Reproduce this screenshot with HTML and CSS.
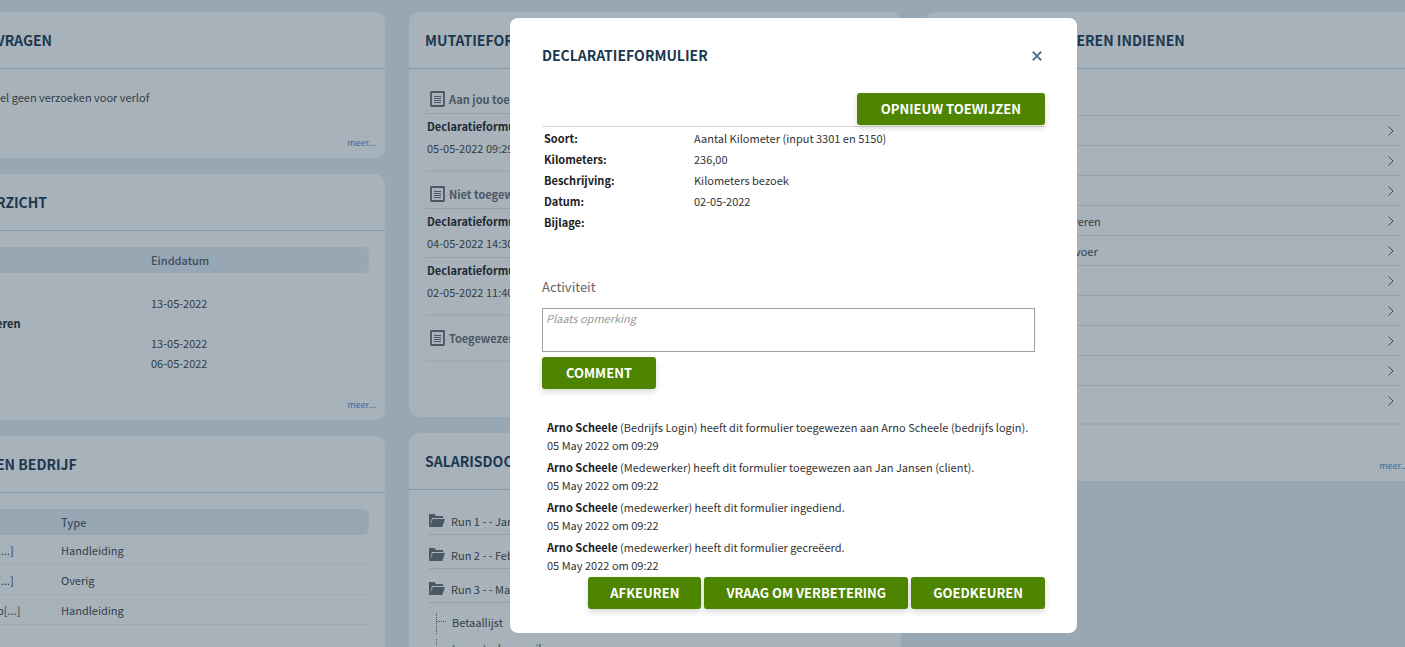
FILE: index.html
```html
<!DOCTYPE html>
<html lang="nl">
<head>
<meta charset="utf-8">
<meta name="viewport" content="width=device-width, initial-scale=1">
<title>Declaratieformulier</title>
<link rel="stylesheet" href="styles.css">
</head>
<body>
<svg class="sprite" aria-hidden="true">
  <symbol id="doc" viewBox="0 0 15 16"><rect x="1" y="1" width="13" height="14" rx=".5" fill="none" stroke="currentColor" stroke-width="1.8"/><path d="M4 5.5h7M4 7.5h7M4 9.5h7M4 11.5h7" stroke="currentColor"/></symbol>
  <symbol id="folder" viewBox="0 0 16 13"><path d="M0 13V0h5.500l1.500 2h7v2H3L.8 12.200L3.800 5H16L13.300 13Z" fill="currentColor"/></symbol>
  <symbol id="chevron" viewBox="0 0 7 10"><path d="M.5 .5L5 5L.5 9.500" fill="none" stroke="currentColor" stroke-width=".9"/></symbol>
</svg>
<main class="board">
  <div class="column">
    <section class="card">
      <h2 class="card-title">VRAGEN</h2>
      <div class="card-body">
        <p class="notice">el geen verzoeken voor verlof</p>
        <a class="more" href="#">meer...</a>
      </div>
    </section>
    <section class="card">
      <h2 class="card-title">RZICHT</h2>
      <div class="card-body">
        <table class="grid leave">
          <thead><tr><th></th><th>Einddatum</th></tr></thead>
          <tbody>
            <tr><td></td><td>13-05-2022</td></tr>
            <tr><td><b>eren</b></td><td></td></tr>
            <tr><td></td><td>13-05-2022</td></tr>
            <tr><td></td><td>06-05-2022</td></tr>
          </tbody>
        </table>
        <a class="more more-table" href="#">meer...</a>
      </div>
    </section>
    <section class="card card-tall">
      <h2 class="card-title">EN BEDRIJF</h2>
      <div class="card-body">
        <table class="grid files">
          <thead><tr><th></th><th>Type</th></tr></thead>
          <tbody>
            <tr><td>[...]</td><td>Handleiding</td></tr>
            <tr><td>[...]</td><td>Overig</td></tr>
            <tr><td>p[...]</td><td>Handleiding</td></tr>
          </tbody>
        </table>
      </div>
    </section>
  </div>

  <div class="column">
    <section class="card">
      <h2 class="card-title">MUTATIEFORMULIEREN</h2>
      <div class="card-body forms">
        <div class="group">
          <h3 class="group-title"><svg class="doc"><use href="#doc"/></svg>Aan jou toegewezen</h3>
          <div class="form-item"><b>Declaratieformulier</b><span>05-05-2022 09:29</span></div>
        </div>
        <div class="group">
          <h3 class="group-title"><svg class="doc"><use href="#doc"/></svg>Niet toegewezen</h3>
          <div class="form-item"><b>Declaratieformulier</b><span>04-05-2022 14:30</span></div>
          <div class="form-item"><b>Declaratieformulier</b><span>02-05-2022 11:40</span></div>
        </div>
        <div class="group">
          <h3 class="group-title"><svg class="doc"><use href="#doc"/></svg>Toegewezen</h3>
        </div>
      </div>
    </section>
    <section class="card">
      <h2 class="card-title">SALARISDOCUMENTEN</h2>
      <div class="card-body runs">
        <div class="run"><svg class="folder"><use href="#folder"/></svg>Run 1 - - Januari</div>
        <div class="run"><svg class="folder"><use href="#folder"/></svg>Run 2 - - Februari</div>
        <div class="run"><svg class="folder"><use href="#folder"/></svg>Run 3 - - Maart</div>
        <ul class="tree">
          <li>Betaallijst</li>
          <li>Loonstroken mail</li>
        </ul>
      </div>
    </section>
  </div>

  <div class="column">
    <section class="card">
      <h2 class="card-title">MUTATIE - FORMULIEREN INDIENEN</h2>
      <div class="card-body submit">
        <ul class="links">
          <li><a href="#" aria-label="Formulier 1"><svg class="chevron"><use href="#chevron"/></svg></a></li>
          <li><a href="#" aria-label="Formulier 2"><svg class="chevron"><use href="#chevron"/></svg></a></li>
          <li><a href="#" aria-label="Formulier 3"><svg class="chevron"><use href="#chevron"/></svg></a></li>
          <li><a href="#">Nieuwe werknemer registreren<svg class="chevron"><use href="#chevron"/></svg></a></li>
          <li><a href="#">Reiskosten woon-werkvervoer<svg class="chevron"><use href="#chevron"/></svg></a></li>
          <li><a href="#" aria-label="Formulier 6"><svg class="chevron"><use href="#chevron"/></svg></a></li>
          <li><a href="#" aria-label="Formulier 7"><svg class="chevron"><use href="#chevron"/></svg></a></li>
          <li><a href="#" aria-label="Formulier 8"><svg class="chevron"><use href="#chevron"/></svg></a></li>
          <li><a href="#" aria-label="Formulier 9"><svg class="chevron"><use href="#chevron"/></svg></a></li>
          <li><a href="#" aria-label="Formulier 10"><svg class="chevron"><use href="#chevron"/></svg></a></li>
        </ul>
        <a class="more more-links" href="#">meer...</a>
      </div>
    </section>
  </div>
</main>

<div class="overlay">
  <div class="modal" role="dialog" aria-modal="true" aria-labelledby="modal-title">
    <header class="modal-head">
      <h1 class="modal-title" id="modal-title">DECLARATIEFORMULIER</h1>
      <button class="close" type="button" aria-label="Sluiten"><svg class="close-icon" viewBox="0 0 10 10"><path d="M.8.8l8.400 8.400M9.200.8L.8 9.200" stroke="currentColor" stroke-width="2"/></svg></button>
    </header>
    <div class="assign"><button class="btn" type="button">OPNIEUW TOEWIJZEN</button></div>
    <dl class="details">
      <dt>Soort:</dt><dd>Aantal Kilometer (input 3301 en 5150)</dd>
      <dt>Kilometers:</dt><dd>236,00</dd>
      <dt>Beschrijving:</dt><dd>Kilometers bezoek</dd>
      <dt>Datum:</dt><dd>02-05-2022</dd>
      <dt>Bijlage:</dt><dd></dd>
    </dl>
    <label class="activity" for="comment">Activiteit</label>
    <textarea class="comment-box" id="comment" placeholder="Plaats opmerking"></textarea>
    <div><button class="btn" type="button">COMMENT</button></div>
    <ul class="log">
      <li><b>Arno Scheele</b> (Bedrijfs Login) heeft dit formulier toegewezen aan Arno Scheele (bedrijfs login).<br>05 May 2022 om 09:29</li>
      <li><b>Arno Scheele</b> (Medewerker) heeft dit formulier toegewezen aan Jan Jansen (client).<br>05 May 2022 om 09:22</li>
      <li><b>Arno Scheele</b> (medewerker) heeft dit formulier ingediend.<br>05 May 2022 om 09:22</li>
      <li><b>Arno Scheele</b> (medewerker) heeft dit formulier gecreëerd.<br>05 May 2022 om 09:22</li>
    </ul>
    <footer class="actions">
      <button class="btn" type="button">AFKEUREN</button>
      <button class="btn" type="button">VRAAG OM VERBETERING</button>
      <button class="btn" type="button">GOEDKEUREN</button>
    </footer>
  </div>
</div>
</body>
</html>
```

FILE: styles.css
```css
:root {
  --page: #98a7b4;
  --card: #a8b2ba;
  --ink: #333d47;
  --strong: #1f2a35;
  --title: #1c3850;
  --line: #94a1ac;
  --line-soft: #9fabb4;
  --green: #4d8400;
}

* { box-sizing: border-box; }

html, body { height: 100%; }

body {
  margin: 0;
  overflow: hidden;
  background: var(--page);
  color: var(--ink);
  font-family: "Noto Sans CJK SC", "Noto Sans", sans-serif;
  font-size: 11px;
  line-height: 20px;
}

h1, h2, h3, p, ul, dl, dd { margin: 0; padding: 0; }
ul { list-style: none; }
button, textarea { font-family: inherit; }
.sprite { position: absolute; width: 0; height: 0; }

.board {
  display: grid;
  grid-template-columns: 405fr 492fr 492fr;
  align-items: start;
  gap: 24px;
  margin: 0 -12px 0 -20px;
  padding-top: 12px;
}

.column { display: grid; gap: 16px; min-width: 0; }

.card { background: var(--card); border-radius: 10px; min-width: 0; }
.card-tall { padding-bottom: 32px; }

.card-title {
  padding: 0 16px;
  border-bottom: 1px solid #8095a7;
  color: var(--title);
  font-size: 14px;
  line-height: 56px;
  white-space: nowrap;
}

.card-body { padding: 16px; }
.notice { padding: 2px 4px 26px; }

.more {
  display: block;
  margin: 0 -7px -11px 0;
  color: #3d6b98;
  font-size: 9px;
  text-align: right;
  text-decoration: none;
}
.more-table { margin-top: 22px; }
.more-links { margin-top: 31px; }

.grid { width: 100%; border-collapse: separate; border-spacing: 0; table-layout: fixed; }
.grid th {
  height: 26px;
  padding: 0;
  background: var(--page);
  color: #3c4e60;
  font-weight: 500;
  text-align: left;
}
.grid th:last-child { border-radius: 0 6px 6px 0; }
.grid td { height: 20px; padding: 0; }
.grid b { color: var(--strong); }
.leave th:first-child { width: 155px; }
.leave tbody::before { content: ""; display: block; height: 20px; }
.files th:first-child { width: 65px; }
.files td { height: 30px; border-bottom: 1px solid var(--line-soft); }
.files td:first-child { padding-left: 1px; }

.forms { padding-top: 8px; padding-bottom: 55px; }
.group { padding: 8px 0; border-bottom: 2px solid var(--line-soft); }
.group-title {
  display: flex;
  align-items: center;
  gap: 4px;
  padding-left: 5px;
  color: #4b5763;
  font-size: 11px;
  line-height: 28px;
}
.doc { width: 15px; height: 16px; }
.form-item { padding: 1px 2px 3px; border-top: 1px solid var(--line); line-height: 22px; }
.form-item b, .form-item span { display: block; }
.form-item b { color: var(--strong); }

.runs { padding: 11px 20px 16px; }
.run {
  display: flex;
  align-items: center;
  gap: 6px;
  height: 34px;
  padding-top: 6px;
  border-bottom: 1px solid var(--line);
}
.folder { width: 16px; height: 13px; color: #4b5763; }
.tree { padding: 6px 0 0 7px; }
.tree li { display: flex; gap: 6px; line-height: 26px; }
.tree li::before {
  content: "";
  width: 9px;
  height: 21px;
  margin-top: 4px;
  border-left: 1px dotted #4b5763;
  background: repeating-linear-gradient(90deg, #4b5763 0 1px, transparent 1px 2px) 0 8px / 100% 1px no-repeat;
}

.submit { padding-top: 46px; }
.links { padding-bottom: 8px; border-bottom: 2px solid var(--line-soft); }
.links a {
  display: flex;
  align-items: center;
  justify-content: space-between;
  height: 30px;
  padding: 0 6px 0 2px;
  border-top: 1px solid var(--line);
  color: var(--ink);
  text-decoration: none;
}
.chevron { width: 7px; height: 10px; margin-left: auto; }

.overlay {
  position: fixed;
  inset: 0;
  display: flex;
  justify-content: center;
  align-items: flex-start;
  padding: 18px 0 0 182px;
}

.modal {
  width: 567px;
  padding: 24px 32px;
  border-radius: 8px;
  background: #fff;
}

.modal-head { display: flex; align-items: center; justify-content: space-between; height: 27px; }
.modal-title { color: var(--title); font-size: 14px; line-height: 27px; }
.close { display: flex; padding: 3px; border: 0; background: none; color: #5c7489; }
.close-icon { width: 10px; height: 10px; }

.assign {
  display: flex;
  justify-content: flex-end;
  margin-top: 24px;
  padding-bottom: 1px;
  border-bottom: 1px solid #d6d6d6;
}

.btn {
  height: 32px;
  padding: 0 24px;
  border: 0;
  border-radius: 3px;
  background: var(--green);
  box-shadow: 0 3px 6px rgba(0, 0, 0, .15);
  color: #fff;
  font-size: 13px;
  font-weight: 700;
  line-height: 20px;
  white-space: nowrap;
}

.details {
  display: grid;
  grid-template-columns: 150px 1fr;
  padding: 1px 2px 0;
  color: #333;
  line-height: 21px;
}
.details dt, .log b { color: #1d1d1d; font-weight: 700; }

.activity { display: block; margin-top: 44px; color: #666; font-size: 13px; line-height: 20px; }

.comment-box {
  display: block;
  width: calc(100% - 10px);
  height: 44px;
  margin: 11px 0 5px;
  padding: 0 3px;
  border: 1px solid #a0a0a0;
  font-size: 11px;
  line-height: 18px;
  resize: none;
}
.comment-box::placeholder { color: #999; font-style: italic; }

.log { display: grid; gap: 4px; padding: 29px 0 3px 5px; color: #333; line-height: 18px; white-space: nowrap; }

.actions { display: flex; justify-content: flex-end; gap: 3px; }
.actions .btn { padding: 0 22px; }
```
